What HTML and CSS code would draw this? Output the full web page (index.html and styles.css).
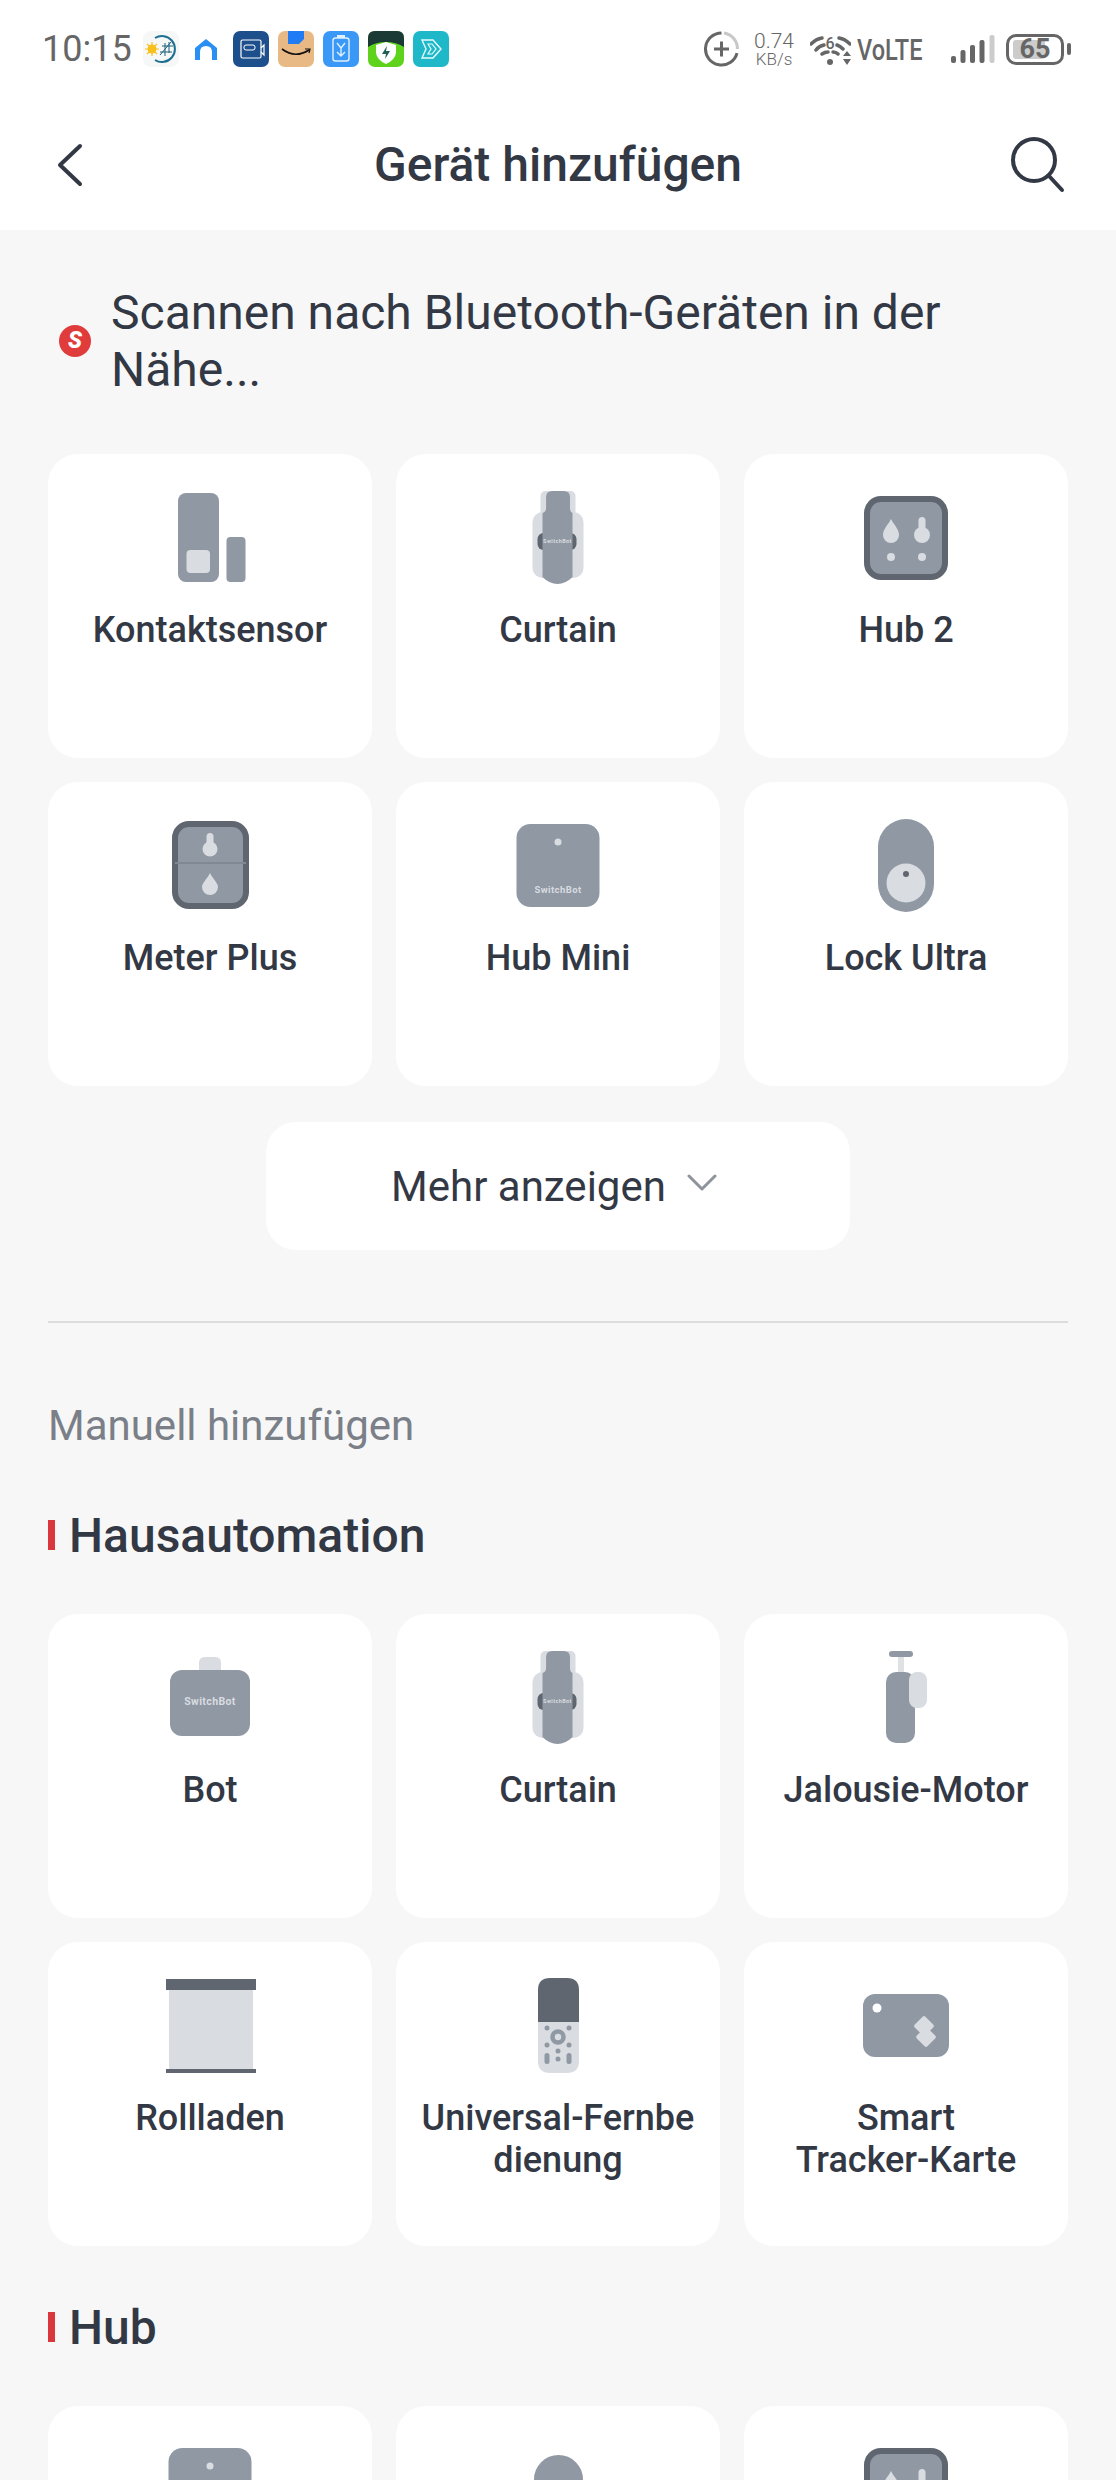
FILE: index.html
```html
<!DOCTYPE html>
<html lang="de">
<head>
  <meta charset="UTF-8" />
  <title>Gerät hinzufügen</title>
  <link rel="stylesheet" href="styles.css">
</head>
<body>

<svg class="defs" width="0" height="0">
  <symbol id="contact" viewBox="0 0 96 96">
    <rect class="grey" x="16" y="3" width="41" height="89" rx="8"/>
    <rect class="light" x="24.5" y="60" width="23.5" height="23" rx="4"/>
    <rect class="grey" x="64.5" y="47" width="19" height="45" rx="4"/>
  </symbol>
  <symbol id="curtain" viewBox="0 0 96 96">
    <rect class="light" x="30.5" y="1" width="35" height="30" rx="5"/>
    <rect class="light" x="22.5" y="22" width="51" height="66" rx="10"/>
    <rect class="dark" x="27.5" y="43" width="39" height="17" rx="6"/>
    <path class="grey" d="M36.100 7Q36.100 1 42.500 1H53.500Q60 1 60 7V18Q60 22 62.500 23V87Q55.500 94 47.500 94Q39.500 94 32.500 87V23Q36.100 22 36.100 18Z"/>
  </symbol>
  <symbol id="hub2" viewBox="0 0 96 96">
    <rect class="grey stroked" x="9" y="9" width="78" height="78" rx="14"/>
    <path class="light" d="M33 29C36 35 41 39 41 45A8 8 0 0 1 25 45C25 39 30 35 33 29Z"/>
    <rect class="light" x="60.5" y="27" width="7" height="16" rx="3.5"/>
    <circle class="light" cx="64" cy="45" r="8"/>
    <circle class="light" cx="33" cy="67" r="4"/>
    <circle class="light" cx="64" cy="67" r="4"/>
  </symbol>
  <symbol id="meter" viewBox="0 0 96 96">
    <rect class="grey stroked" x="13" y="6" width="71" height="82" rx="14"/>
    <rect class="line" x="13" y="44" width="71" height="2"/>
    <rect class="light" x="44.5" y="15" width="7" height="16" rx="3.5"/>
    <circle class="light" cx="48" cy="31" r="7.5"/>
    <path class="light" d="M48 55C51 61 56 65 56 69A8 8 0 0 1 40 69C40 65 45 61 48 55Z"/>
  </symbol>
  <symbol id="mini" viewBox="0 0 96 96">
    <rect class="grey" x="6.500" y="6" width="83" height="83" rx="14"/>
    <circle class="light" cx="48" cy="24" r="3.5"/>
  </symbol>
  <symbol id="lock" viewBox="0 0 96 96">
    <rect class="grey" x="20" y="1" width="56" height="93" rx="28"/>
    <circle class="light" cx="48" cy="65" r="19.5"/>
    <circle class="dark" cx="48" cy="56" r="3"/>
  </symbol>
  <symbol id="bot" viewBox="0 0 96 96">
    <path class="light" d="M37 24V13Q37 7 43 7H53Q59 7 59 13V24Z"/>
    <rect class="grey" x="8" y="20" width="80" height="66" rx="12"/>
  </symbol>
  <symbol id="blind" viewBox="0 0 96 96">
    <rect class="line-light" x="40" y="6" width="6" height="18"/>
    <rect class="grey" x="28" y="22" width="29" height="71" rx="10"/>
    <rect class="light" x="51" y="22" width="18" height="36" rx="8"/>
    <rect class="grey" x="31" y="1" width="24" height="6" rx="3"/>
  </symbol>
  <symbol id="roller" viewBox="0 0 96 96">
    <rect class="light" x="7" y="12" width="84" height="80"/>
    <rect class="dark" x="4" y="1" width="90" height="11"/>
    <rect class="dark" x="4" y="91" width="90" height="4"/>
  </symbol>
  <symbol id="remote" viewBox="0 0 96 96">
    <path class="light" d="M28 44H69V83Q69 95 57 95H40Q28 95 28 83Z"/>
    <path class="dark" d="M28 44V12Q28 0 40 0H57Q69 0 69 12V44Z"/>
    <circle class="ring" cx="48" cy="59" r="5.5"/>
    <circle class="grey" cx="37" cy="50" r="2.5"/>
    <circle class="grey" cx="59" cy="50" r="2.5"/>
    <circle class="grey" cx="37" cy="67" r="2.5"/>
    <circle class="grey" cx="59" cy="67" r="2.5"/>
    <circle class="grey" cx="48" cy="73" r="2.5"/>
    <circle class="grey" cx="48" cy="81" r="2.5"/>
    <rect class="grey" x="34.5" y="75" width="5" height="11" rx="2.5"/>
    <rect class="grey" x="56.5" y="75" width="5" height="11" rx="2.5"/>
  </symbol>
  <symbol id="tracker" viewBox="0 0 96 96">
    <rect class="grey" x="5" y="16" width="86" height="63" rx="12"/>
    <circle class="white" cx="19" cy="30" r="4.5"/>
    <rect class="light" x="58.5" y="40.5" width="15" height="15" rx="2" transform="rotate(45 66 48)"/>
    <rect class="light" x="60.5" y="51.5" width="15" height="15" rx="2" transform="rotate(45 68 59)"/>
  </symbol>
  <symbol id="oval" viewBox="0 0 96 96">
    <rect class="grey" x="24" y="13" width="49" height="76" rx="24.5"/>
  </symbol>
</svg>

<div class="page">

  <header class="top">
    <div class="status">
      <span class="time">10:15</span>
      <div class="apps">
        <svg class="app" viewBox="0 0 36 36">
          <rect width="36" height="36" rx="8" fill="#f6f8f7"/>
          <path d="M12 7A13 13 0 1 1 12 29" fill="none" stroke="#1f6f91" stroke-width="2"/>
          <circle cx="9" cy="18" r="4.5" fill="#f7c01c"/>
          <path d="M9 11V25M2 18H16M4 13L14 23M14 13L4 23" stroke="#f7c01c" stroke-width="1.2"/>
          <path d="M17 24L28 11M19 15H30M17 21H29M22 12V25M26 11V22" stroke="#1f5f7d" stroke-width="1" fill="none"/>
        </svg>
        <svg class="app" viewBox="0 0 36 36">
          <path d="M7 29V17L18 8L29 17V29H24V21Q24 15 18 15Q12 15 12 21V29Z" fill="#2a8ff2"/>
        </svg>
        <svg class="app" viewBox="0 0 36 36">
          <rect width="36" height="36" rx="7" fill="#1c4f8c"/>
          <rect x="8" y="9" width="20" height="18" rx="1.5" fill="none" stroke="#fff" stroke-width="1.2"/>
          <rect x="11" y="14" width="11" height="5" rx="2" fill="none" stroke="#fff" stroke-width="1"/>
          <path d="M28 17L31 14V24L28 21" fill="none" stroke="#fff" stroke-width="1.2"/>
        </svg>
        <svg class="app" viewBox="0 0 36 36">
          <rect width="36" height="36" rx="7" fill="#e9b985"/>
          <path d="M10 0H26V8L21 13H10Z" fill="#1f7cf5"/>
          <path d="M4 18Q17 28 31 19" fill="none" stroke="#111" stroke-width="1.6"/>
          <path d="M27 18L32 18L31 22" fill="none" stroke="#111" stroke-width="1.2"/>
        </svg>
        <svg class="app" viewBox="0 0 36 36">
          <rect width="36" height="36" rx="7" fill="#3a98f7"/>
          <rect x="10" y="7" width="16" height="23" rx="2.5" fill="none" stroke="#dff0ff" stroke-width="1.4"/>
          <rect x="14" y="4" width="8" height="3" fill="#dff0ff"/>
          <path d="M14 12L18 17V25M22 12L18 17M14 21L18 25L22 21" fill="none" stroke="#dff0ff" stroke-width="1.4"/>
        </svg>
        <svg class="app" viewBox="0 0 36 36">
          <rect width="36" height="36" rx="7" fill="#5fd31b"/>
          <path d="M0 16V7Q0 0 7 0H29Q36 0 36 7V16Q28 11 18 11Q8 11 0 16Z" fill="#1b3a36"/>
          <path d="M18 11L28 14V22Q27 29 18 33Q9 29 8 22V14Z" fill="#fff"/>
          <path d="M19 15L14 23H18L17 28L22 20H18Z" fill="#1f5f55"/>
        </svg>
        <svg class="app" viewBox="0 0 36 36">
          <rect width="36" height="36" rx="7" fill="#1fb8c9"/>
          <path d="M9 9H20L28 18L20 27H9L13 18Z" fill="none" stroke="#e5fbfd" stroke-width="1.4"/>
          <path d="M15 13H19L23 18L19 23H15L18 18Z" fill="none" stroke="#e5fbfd" stroke-width="1.2"/>
        </svg>
      </div>

      <div class="sys">
        <svg class="boost" viewBox="0 0 37 36">
          <path d="M21 2A16 16 0 0 1 34.500 18" fill="none" stroke="#c8c8c8" stroke-width="3"/>
          <path d="M18.500 2A16 16 0 1 0 34 22" fill="none" stroke="#666" stroke-width="3"/>
          <path d="M11 18H26M18.500 10.500V25.500" stroke="#666" stroke-width="3"/>
        </svg>
        <div class="speed"><span>0.74</span><span class="unit">KB/s</span></div>
        <svg class="wifi" viewBox="0 0 41 34">
          <path d="M1 12Q6 7 12 6M6 18Q9 14 14 13M29 6Q35 7 40 12M27 13Q30 14 33 17M12 22Q15 20 18 20M23 20Q26 20 28 22" fill="none" stroke="#666" stroke-width="3.500" stroke-linecap="round"/>
          <circle cx="20" cy="30" r="3" fill="#666"/>
          <text class="wifi-six" x="20" y="17">6</text>
          <path d="M33 24H41L37 19ZM33 27H41L37 33Z" fill="#666"/>
        </svg>
        <svg class="volte" viewBox="0 0 88 36" preserveAspectRatio="none">
          <text x="0" y="29">VoLTE</text>
        </svg>
        <svg class="signal" viewBox="0 0 44 28">
          <rect x="0" y="21" width="5" height="7" rx="2" fill="#666"/>
          <rect x="9.500" y="15" width="5" height="13" rx="2" fill="#666"/>
          <rect x="19" y="10" width="5" height="18" rx="2" fill="#666"/>
          <rect x="28.500" y="5" width="5" height="23" rx="2" fill="#666"/>
          <rect x="38.500" y="0" width="5" height="28" rx="2" fill="#ccc"/>
        </svg>
        <div class="battery">
          <div class="battery-body">
            <div class="battery-fill"></div>
            <span class="battery-num">65</span>
          </div>
          <div class="battery-tip"></div>
        </div>
      </div>
    </div>

    <div class="bar">
      <svg class="back" viewBox="0 0 30 46">
        <path d="M25 4L5 23L25 42"/>
      </svg>
      <h1 class="title">Gerät hinzufügen</h1>
      <svg class="search" viewBox="0 0 60 60">
        <circle cx="26" cy="26" r="21"/>
        <path d="M41 42L54 56"/>
      </svg>
    </div>
  </header>

  <main class="main">
    <div class="scan">
      <span class="scan-dot">S</span>
      <p class="scan-text">Scannen nach Bluetooth-Geräten in der Nähe...</p>
    </div>

    <div class="grid">
      <div class="card"><svg class="dev" viewBox="0 0 96 96"><use href="#contact"/></svg><div class="name">Kontaktsensor</div></div>
      <div class="card"><svg class="dev" viewBox="0 0 96 96"><use href="#curtain"/><text class="tiny tiny-s" x="47.500" y="53">SwitchBot</text></svg><div class="name">Curtain</div></div>
      <div class="card"><svg class="dev" viewBox="0 0 96 96"><use href="#hub2"/></svg><div class="name">Hub 2</div></div>
      <div class="card"><svg class="dev" viewBox="0 0 96 96"><use href="#meter"/></svg><div class="name">Meter Plus</div></div>
      <div class="card"><svg class="dev" viewBox="0 0 96 96"><use href="#mini"/><text class="tiny" x="48" y="75">SwitchBot</text></svg><div class="name">Hub Mini</div></div>
      <div class="card"><svg class="dev" viewBox="0 0 96 96"><use href="#lock"/></svg><div class="name">Lock Ultra</div></div>
    </div>

    <button class="more">
      <span>Mehr anzeigen</span>
      <svg class="more-arrow" viewBox="0 0 30 18"><path d="M2 2L15 15L28 2"/></svg>
    </button>

    <hr class="divider">

    <div class="manual">Manuell hinzufügen</div>

    <h2 class="group">Hausautomation</h2>
    <div class="grid">
      <div class="card"><svg class="dev" viewBox="0 0 96 96"><use href="#bot"/><text class="tiny tiny-l" x="48" y="55">SwitchBot</text></svg><div class="name">Bot</div></div>
      <div class="card"><svg class="dev" viewBox="0 0 96 96"><use href="#curtain"/><text class="tiny tiny-s" x="47.500" y="53">SwitchBot</text></svg><div class="name">Curtain</div></div>
      <div class="card"><svg class="dev" viewBox="0 0 96 96"><use href="#blind"/></svg><div class="name">Jalousie-Motor</div></div>
      <div class="card"><svg class="dev" viewBox="0 0 96 96"><use href="#roller"/></svg><div class="name">Rollladen</div></div>
      <div class="card"><svg class="dev" viewBox="0 0 96 96"><use href="#remote"/></svg><div class="name">Universal-Fernbe<br>dienung</div></div>
      <div class="card"><svg class="dev" viewBox="0 0 96 96"><use href="#tracker"/></svg><div class="name">Smart<br>Tracker-Karte</div></div>
    </div>

    <h2 class="group group-next">Hub</h2>
    <div class="grid">
      <div class="card"><svg class="dev" viewBox="0 0 96 96"><use href="#mini"/></svg></div>
      <div class="card"><svg class="dev" viewBox="0 0 96 96"><use href="#oval"/></svg></div>
      <div class="card"><svg class="dev" viewBox="0 0 96 96"><use href="#hub2"/></svg></div>
    </div>
  </main>

</div>

</body>
</html>
```

FILE: styles.css
```css
html, body {
  margin: 0;
  padding: 0;
}
body {
  font-family: Roboto, 'Liberation Sans', sans-serif;
  color: #333845;
  background: #f7f7f7;
}
.defs {
  position: absolute;
}
.page {
  height: 2480px;
  overflow: hidden;
}

/* device icon colours */
.grey { fill: #8f98a3; }
.light { fill: #d9dce0; }
.dark { fill: #5f6670; }
.white { fill: #fff; }
.line { fill: #7f8893; }
.line-light { fill: #dfe2e5; }
.stroked { stroke: #5f6670; stroke-width: 6; }
.ring { fill: none; stroke: #8f98a3; stroke-width: 4.5; }
.tiny {
  fill: #d9dce0;
  font-size: 9.5px;
  font-weight: 700;
  text-anchor: middle;
  letter-spacing: .4px;
}
.tiny-s { font-size: 5.5px; }
.tiny-l { font-size: 10.5px; }

/* status bar + title */
.top {
  background: #fff;
  height: 230px;
}
.status {
  height: 98px;
  display: flex;
  align-items: center;
  padding: 0 45px 0 42px;
}
.time {
  font-size: 36px;
  color: #666;
  width: 101px;
}
.apps {
  display: flex;
  gap: 9px;
}
.app {
  width: 36px;
  height: 36px;
}
.sys {
  margin-left: auto;
  display: flex;
  align-items: center;
}
.boost {
  width: 37px;
  height: 36px;
}
.speed {
  display: flex;
  flex-direction: column;
  align-items: center;
  width: 42px;
  margin-left: 13px;
  color: #666;
  font-size: 21px;
  font-weight: 300;
  line-height: 19px;
}
.unit {
  font-size: 17px;
  line-height: 16px;
}
.wifi {
  width: 41px;
  height: 34px;
  margin-left: 15px;
}
.wifi-six {
  font-size: 16px;
  font-weight: 500;
  fill: #666;
  text-anchor: middle;
}
.volte {
  width: 69px;
  height: 36px;
  margin-left: 6px;
  font-size: 30px;
  fill: #666;
  font-weight: 500;
}
.signal {
  width: 44px;
  height: 28px;
  margin-left: 25px;
}
.battery {
  display: flex;
  align-items: center;
  margin-left: 11px;
}
.battery-body {
  position: relative;
  width: 58px;
  height: 31px;
  box-sizing: border-box;
  border: 3px solid #666;
  border-radius: 10px;
  display: flex;
  align-items: center;
  justify-content: center;
}
.battery-fill {
  position: absolute;
  left: 4px;
  top: 3px;
  bottom: 3px;
  width: 32px;
  background: #ccc;
  border-radius: 3px;
}
.battery-num {
  position: relative;
  font-size: 27px;
  font-weight: 700;
  color: #666;
  line-height: 25px;
}
.battery-tip {
  width: 4px;
  height: 12px;
  margin-left: 3px;
  background: #666;
  border-radius: 2px;
}
.bar {
  position: relative;
  height: 132px;
  display: flex;
  align-items: center;
  justify-content: center;
}
.title {
  margin: 2px 0 0;
  font-size: 48px;
  font-weight: 500;
  line-height: 60px;
}
.back {
  position: absolute;
  left: 55px;
  top: 44px;
  width: 30px;
  height: 46px;
  fill: none;
  stroke: #333845;
  stroke-width: 4;
  stroke-linecap: round;
  stroke-linejoin: round;
}
.search {
  position: absolute;
  left: 1008px;
  top: 36px;
  width: 60px;
  height: 60px;
  fill: none;
  stroke: #333845;
  stroke-width: 4;
  stroke-linecap: round;
}

/* scanning row */
.main {
  padding: 54px 48px 0;
}
.scan {
  display: flex;
  align-items: center;
  gap: 20px;
  padding-left: 11px;
  margin-bottom: 56px;
}
.scan-dot {
  flex: none;
  width: 32px;
  height: 32px;
  border-radius: 50%;
  background: #e03c3c;
  color: #fff;
  font-size: 23px;
  font-weight: 900;
  font-style: italic;
  line-height: 32px;
  text-align: center;
}
.scan-text {
  margin: 0;
  font-size: 48px;
  line-height: 57px;
}

/* cards */
.grid {
  display: grid;
  grid-template-columns: repeat(3, 324px);
  grid-auto-rows: 304px;
  gap: 24px;
}
.card {
  background: #fff;
  border-radius: 30px;
  padding-top: 36px;
  box-sizing: border-box;
  text-align: center;
}
.dev {
  display: block;
  width: 96px;
  height: 96px;
  margin: 0 auto 23px;
}
.name {
  font-size: 36px;
  font-weight: 500;
  line-height: 42px;
}

/* show more */
.more {
  display: flex;
  align-items: center;
  justify-content: center;
  gap: 21px;
  width: 584px;
  height: 128px;
  margin: 36px auto 0;
  padding: 0 8px 0 0;
  border: none;
  border-radius: 30px;
  background: #fff;
  font-family: inherit;
  font-size: 42px;
  color: #333845;
}
.more-arrow {
  width: 30px;
  height: 18px;
  margin-bottom: 6px;
  fill: none;
  stroke: #8f949c;
  stroke-width: 3;
  stroke-linecap: round;
  stroke-linejoin: round;
}
.divider {
  height: 2px;
  margin: 71px 0 0;
  border: none;
  background: #dcdcdc;
}
.manual {
  margin-top: 81px;
  font-size: 42px;
  line-height: 44px;
  color: #7a7f88;
}
.group {
  position: relative;
  margin: 61px 0 51px;
  padding-left: 21px;
  font-size: 48px;
  font-weight: 500;
  line-height: 54px;
}
.group::before {
  content: "";
  position: absolute;
  left: 0;
  top: 11px;
  width: 7px;
  height: 30px;
  background: #d9363e;
}
.group-next {
  margin-top: 55px;
}
```
